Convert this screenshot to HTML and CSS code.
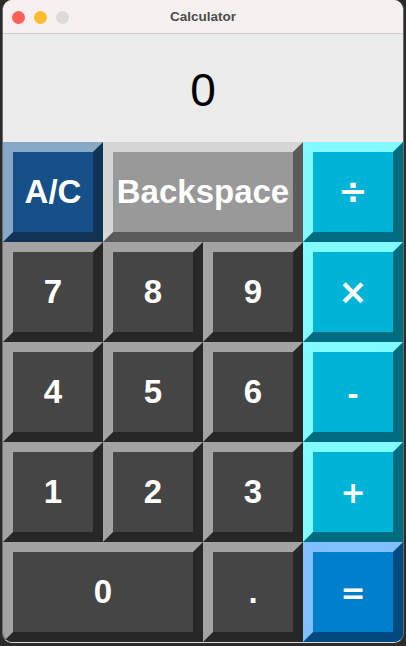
FILE: index.html
```html
<!DOCTYPE html>
<html>
<head>
<meta charset="utf-8">
<link rel="stylesheet" href="styles.css">
</head>
<body>
<div class="window">
  <div class="titlebar">
    <div class="lights">
      <span class="light red"></span>
      <span class="light yellow"></span>
      <span class="light gray"></span>
    </div>
    <div class="title">Calculator</div>
  </div>
  <div class="display">0</div>
  <div class="keys">
    <button class="key clear">A/C</button>
    <button class="key back wide">Backspace</button>
    <button class="key op sym">÷</button>
    <button class="key num">7</button>
    <button class="key num">8</button>
    <button class="key num">9</button>
    <button class="key op sym">×</button>
    <button class="key num">4</button>
    <button class="key num">5</button>
    <button class="key num">6</button>
    <button class="key op minus">-</button>
    <button class="key num">1</button>
    <button class="key num">2</button>
    <button class="key num">3</button>
    <button class="key op plus">+</button>
    <button class="key num wide">0</button>
    <button class="key num">.</button>
    <button class="key eq plus">=</button>
  </div>
</div>
</body>
</html>
```

FILE: styles.css
```css
html, body {
  margin: 0;
  padding: 0;
  background: #2b2b2b;
  height: 646px;
  overflow: hidden;
}

.window {
  margin: 0 2px;
  width: 400px;
  border: 1px solid #6b6b6b;
  border-top: none;
  border-bottom: 1px solid #dcdcdc;
  border-radius: 10px;
  overflow: hidden;
  background: #ececec;
  font-family: "Liberation Sans", Arial, sans-serif;
}

.titlebar {
  position: relative;
  height: 33px;
  background: #f6f1f0;
  border-bottom: 1px solid #cfcccb;
  display: flex;
  align-items: center;
  justify-content: center;
}

.lights {
  position: absolute;
  left: 9px;
  top: 11px;
  display: flex;
  gap: 9px;
}

.light {
  width: 13px;
  height: 13px;
  border-radius: 50%;
  display: block;
}

.red { background: #fe5f57; }
.yellow { background: #febc2e; }
.gray { background: #dcdada; }

.title {
  font-size: 13.5px;
  font-weight: bold;
  color: #4c4c4c;
}

.display {
  height: 108px;
  background: #ececec;
  display: flex;
  align-items: center;
  justify-content: center;
  font-size: 46px;
  color: #000;
  padding-top: 3px;
  box-sizing: border-box;
}

.keys {
  display: grid;
  grid-template-columns: repeat(4, 100px);
  grid-auto-rows: 100px;
}

.key {
  margin: 0;
  padding: 0;
  border: 10px solid;
  font-family: "Liberation Sans", Arial, sans-serif;
  font-weight: bold;
  font-size: 33px;
  color: #fff;
  display: flex;
  align-items: center;
  justify-content: center;
  box-sizing: border-box;
  width: 100%;
  height: 100%;
}

.sym {
  font-family: "DejaVu Sans", sans-serif;
  font-size: 35px;
}

.plus {
  font-family: "DejaVu Sans", sans-serif;
  font-size: 30px;
}

.minus {
  padding-top: 4px;
}

.wide { grid-column: span 2; }

.clear {
  background: #175088;
  border-color: #88a8c8 #113456 #113456 #88a8c8;
}

.back {
  background: #999999;
  border-color: #d6d6d6 #5b5b5b #5b5b5b #d6d6d6;
}

.op {
  background: #00b4d8;
  border-color: #80fcff #006c80 #006c80 #80fcff;
}

.num {
  background: #454545;
  border-color: #a3a3a3 #272727 #272727 #a3a3a3;
}

.eq {
  background: #0080cc;
  border-color: #80c0ff #004a80 #004a80 #80c0ff;
}
```
